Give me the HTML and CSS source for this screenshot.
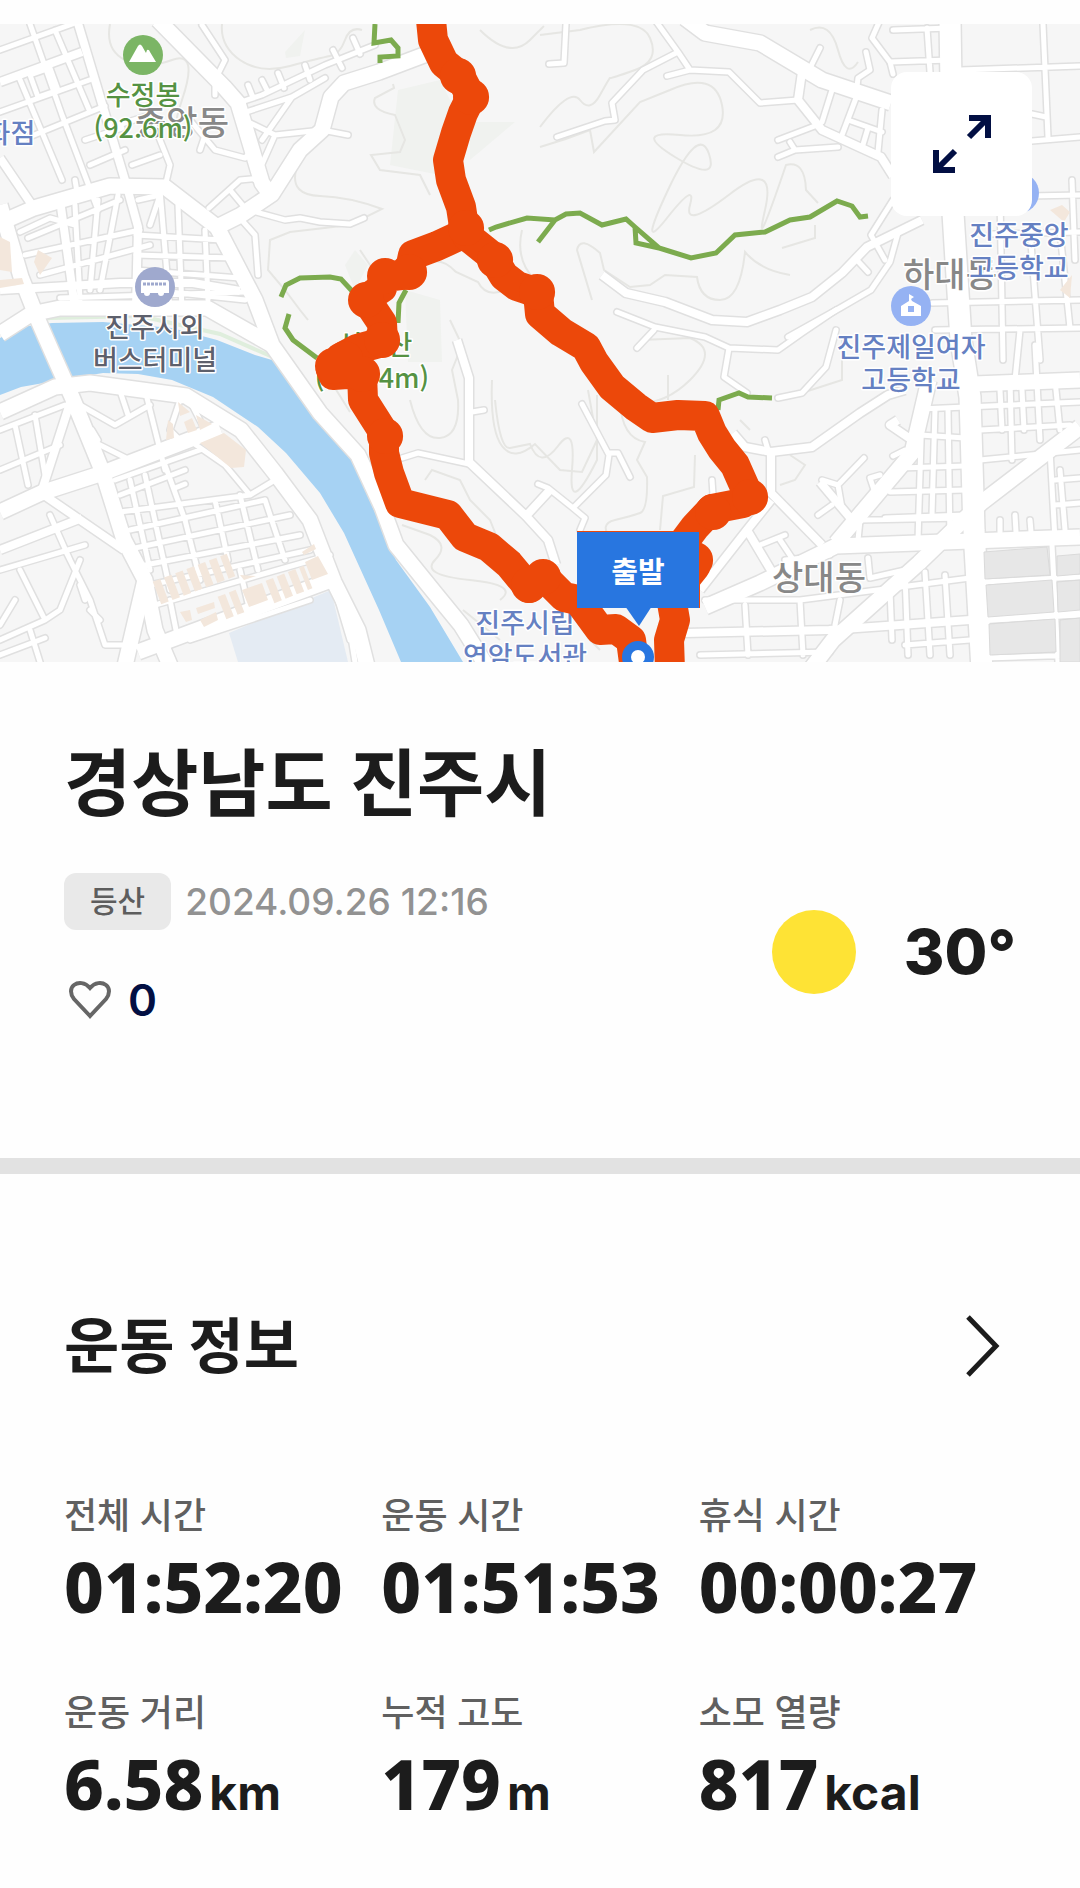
FILE: index.html
```html
<!DOCTYPE html>
<html lang="ko">
<head>
    <meta charset="UTF-8">
    <meta name="viewport" content="width=device-width, initial-scale=1.0">
    <title>경상남도 진주시 - 운동 기록</title>
    <link rel="stylesheet" href="styles.css">
</head>
<body>
    <section class="map">
        <svg class="map-view" viewBox="0 24 1080 638" role="img" aria-label="운동 경로 지도">
            <defs>
                <g id="roads-major" fill="none" stroke-linejoin="round">
                    <path d="M0 223 34 208 110 186 165 187 217 227 241 215 272 194 300 150 322 130 331 97 344 83 379 72 424 55"/>
                    <path d="M158 20 224 87 238 103 262 183 270 194"/>
                    <path d="M217 227 255 300 272 345 320 413 358 455 382 507 396 545 434 592 461 625 489 670"/>
                    <path d="M0 205 21 277 38 320 52 352 72 397 103 473 124 540 145 580 155 630 172 670"/>
                    <path d="M0 412 55 387 90 383 186 396 241 430 275 473 310 520 334 582 358 630 368 670"/>
                    <path d="M0 512 41 493 103 473 220 428"/>
                    <path d="M138 652 331 580M124 670 145 580"/>
                    <path d="M0 334 31 314 60 308 207 308 272 345"/>
                    <path d="M685 18 705 33 760 43 822 80 891 103"/>
                    <path d="M1080 427 981 503 919 563 833 640 810 670"/>
                    <path d="M1080 537 836 546 760 583 705 607"/>
                    <path d="M929 380 912 453 836 543M1080 380 974 384"/>
                </g>
                <g id="roads-wide" fill="none">
                    <path d="M950 20 953 213 961 340 970 397 974 530 982 670"/>
                </g>
                <g id="roads-mid" fill="none" stroke-linejoin="round">
                    <path d="M77 20 103 107 127 187 138 227 136 308"/>
                    <path d="M0 290 120 283 193 283 240 291"/>
                    <path d="M0 82 82 52M0 158 34 208M60 200 75 308M72 397 41 493 124 550M0 550 82 518"/>
                    <path d="M802 72 798 100 822 130 881 157 893 176"/>
                    <path d="M733 433 745 447 771 452 812 447 860 413 888 395 905 390"/>
                    <path d="M771 450 771 493 822 545M700 590 747 530 771 500M747 530 772 572"/>
                    <path d="M922 220 867 247 842 273 812 297 780 310 747 322 712 320 665 302 626 293 602 275"/>
                    <path d="M457 340 469 378 469 462 526 516 548 540 556 565M526 516 550 490"/>
                    <path d="M685 633 829 630 970 620 1080 613"/>
                    <path d="M898 420 890 425 912 440M820 482 852 520"/>
                </g>
                <g id="roads-minor" fill="none" stroke-linecap="round" stroke-linejoin="round">
                    <path d="M557 137 605 121 615 120 612 103 643 70 678 52 655 20M678 52 690 70 667 76M690 70 729 72 745 88 760 103 798 100"/>
                    <path d="M566 24 564 63 549 64M808 72 820 48M778 140 820 124M778 157 795 150 838 147M790 142 795 150"/>
                    <path d="M880 20 872 38 890 62 893 74M866 52 870 70 858 78 856 95M832 90 822 122M856 98 842 135M882 110 878 152M848 120 882 132M868 128 862 148"/>
                    <path d="M890 62 950 60M893 30 950 28M927 28 930 72M1043 24 1048 137M960 70 1080 66M1032 114 1046 117M1032 141 1080 137"/>
                    <path d="M893 200 871 235 885 260M898 233 890 262 871 290 840 308 788 337M855 258 868 272"/>
                    <path d="M245 209 285 220 300 218 320 222 350 224 364 218"/>
                    <path d="M617 312 655 327 705 337 729 348 778 350 802 333 836 310M654 330 637 348M729 348 724 377 747 393M836 330 826 367 802 393 778 398"/>
                    <path d="M582 404 609 455 606 475 573 508 548 488 538 484M609 453 618 453 630 477M573 508 585 518 580 530"/>
                    <path d="M864 458 838 485 822 480M838 485 842 508M880 475 870 478 874 490M905 450 893 456M818 515 832 505M712 480 713 495M765 440 768 450M402 458 418 453 469 464M472 412 484 410"/>
                    <!-- 동부 시가지 -->
                    <path d="M975 197 1080 195M990 234 1080 232M932 303 1080 300M935 330 1080 328M1000 197 1003 360M1030 230 1040 360M1060 232 1070 328M1072 180 1075 260M1020 330 1015 380"/>
                    <path d="M920 409 1080 402M920 435 965 438M900 468 965 466M890 492 965 490M885 518 965 515M858 540 860 520 965 518M1010 380 1012 460M1035 345 1040 440M980 460 1080 450M1050 450 1055 540M1055 480 1080 478M1055 505 1080 503M1060 470 1065 530"/>
                    <path d="M935 409 932 515M948 409 950 540M922 409 918 540M980 430 1070 425M1000 390 1002 430M1022 390 1024 430M1055 380 1060 430M1000 520 1000 532M1015 515 1016 532M1030 520 1031 532"/>
                    <path d="M705 600 800 600 970 578M745 605 748 655M800 600 803 655M840 600 835 625M905 575 908 655M925 572 930 655M890 590 892 640M945 575 950 655M700 655 830 652M905 645 970 640M780 540 800 570M790 580 785 560 830 555M760 545 785 535"/>
                    <path d="M983 582 1080 577M985 620 1080 615M985 658 1080 655M1052 545 1058 662M868 558 870 578 905 570"/>
                    <!-- 서부 시가지 -->
                    <path d="M0 50 78 22M0 112 95 78M22 140 105 106M30 24 62 115M55 30 90 112M62 115 98 210M18 75 62 180M30 75 50 68 58 90 38 97 30 75M85 140 122 128M90 165 125 150M75 180 78 198M118 125 150 115 170 165 165 187M132 165 160 155"/>
                    <path d="M238 103 262 95 325 65 375 45M243 113 292 97 325 78M248 85 252 95M262 80 268 92M278 73 284 88M333 50 342 68M353 38 360 54M305 65 310 80M240 118 275 135 255 180M292 97 262 140M275 135 322 130 348 135M202 25 225 60 215 80 215 95"/>
                    <path d="M190 120 215 150 245 158 252 150M205 135 200 150M209 208 240 180 262 178M230 190 245 208M239 217 255 235 258 275"/>
                    <path d="M20 232 50 218 75 225M28 238 120 200M25 255 140 230M40 275 150 245M75 205 80 300M98 200 90 290M118 195 100 290M136 235 222 240M136 255 232 258M136 270 240 278M160 190 170 310M178 205 182 310M205 230 208 300M150 290 245 300M60 298 245 292M138 200 160 195 150 225"/>
                    <path d="M0 430 65 405M0 470 60 445M15 425 28 485M35 415 45 475M80 405 115 425 150 405M118 385 128 415M145 390 165 470M90 440 130 460M92 430 98 440M165 465 185 520M180 400 170 430 180 440M192 405 205 430"/>
                    <path d="M196 445 225 465 250 495 275 480M115 480 200 450M120 495 185 470M120 512 250 495M130 530 265 500M135 548 290 515M140 566 300 535M150 585 310 550M130 480 150 570M145 475 170 590M185 520 200 580M215 500 228 560M240 495 258 570M265 500 285 560M185 484 175 488"/>
                    <path d="M0 570 85 545M20 570 45 620 60 610 80 560M45 620 0 640M65 550 90 600 105 645 125 645M85 600 80 585M90 610 100 620M15 600 0 625M0 655 45 638M30 630 40 662M50 515 70 560"/>
                    <path d="M155 605 330 555M170 600 178 640M190 640 310 600M240 570 250 612M345 600 355 662M335 590 350 640"/>
                </g>
            </defs>

            <rect class="land" x="0" y="24" width="1080" height="638"/>
            <g class="hill">
                <path d="M398 90 440 80 470 140 440 175 390 165ZM470 122 515 122 470 160ZM285 52 305 30 300 56 286 58ZM405 290 440 300 442 362 408 362ZM355 250 368 265 355 290 345 265Z"/>
            </g>
            <g class="contour">
                <path d="M222 24Q220 46 240 60T290 66 330 56 345 40 362 30M110 24Q105 50 125 60T172 60 182 100 195 120"/>
                <path d="M393 84 394 88 375 98Q370 110 395 115L405 140 400 152 371 155 380 170 420 175 430 195M296 170Q290 195 320 196T382 209L350 225 290 232 270 240 268 270 285 290 300 310 308 320M360 250 370 265 378 275"/>
                <path d="M540 147Q565 140 590 130L594 152 640 102 670 90Q715 70 722 105T680 135 675 157 709 154 668 190 667 218 690 205 730 194 765 210 786 165Q805 160 806 190L818 203"/>
                <path d="M540 35 580 30Q640 15 650 38T635 70 610 78 600 95 580 100 540 127M810 30Q830 20 838 50T858 62M480 30Q510 60 530 40T540 30"/>
                <path d="M592 300 577 250Q580 235 600 253L604 270 630 287 650 285 665 275 697 277Q700 300 720 300T745 252Q760 270 790 275M815 225 815 238 782 248"/>
                <path d="M424 265Q440 255 456 272L478 282Q486 298 505 290M522 230Q515 260 535 280M410 400Q420 440 440 438T458 400L452 370 462 345 450 320M492 380Q490 430 502 446T535 444L560 470 582 472 597 440 588 390"/>
                <path d="M495 400Q500 450 510 448T530 444Q540 470 558 446T572 470 597 460V395M640 340 690 338Q720 350 690 380T620 402Q622 438 645 442L637 460 647 477Q648 510 640 513T615 520 612 540M668 400V375"/>
                <path d="M695 455 694 487 663 496 660 530M842 340 842 380 780 400M750 430 740 420M790 455 805 465 795 480 780 485"/>
                <path d="M425 480 432 470 460 480 470 500 490 520 500 545M402 525 430 535Q450 545 435 560T470 580 500 600M330 380 350 412M463 610 500 640M590 640 600 650"/>
            </g>

            <path class="river-bank" d="M0 332 20 323 50 318 140 316 220 334 275 358"/>
            <path class="river" d="M0 338 21 327 52 323 103 322 172 328 217 340 255 355 272 360 303 393 344 443 365 490 386 537 396 560 430 607 463 662 401 662 379 610 344 533 320 493 286 453 258 427 213 397 172 380 138 374 103 373 55 381 21 387 0 395Z"/>
            <path class="pond" d="M229 633 331 590 348 662 238 662Z"/>

            <g class="road-casing">
                <use href="#roads-minor" stroke-width="8"/>
                <use href="#roads-mid" stroke-width="11"/>
                <use href="#roads-major" stroke-width="18"/>
                <use href="#roads-wide" stroke-width="24"/>
            </g>
            <g class="road-fill">
                <use href="#roads-minor" stroke-width="5"/>
                <use href="#roads-mid" stroke-width="8"/>
                <use href="#roads-major" stroke-width="15"/>
                <use href="#roads-wide" stroke-width="21"/>
            </g>

            <g class="block-warm">
                <path d="M200 443 224 433 246 450 244 467 231 468ZM178 402 190 412 180 416ZM196 415 212 424 200 430ZM184 422 192 418 197 430 188 433ZM168 420 173 424 174 438 166 440ZM0 237 10 242 12 272 0 270ZM38 250 52 258 40 275 34 262ZM0 280 22 278 24 284 0 288ZM1050 210 1062 205 1070 212 1064 222ZM1060 290 1072 275 1070 298Z"/>
                <path d="M302 552 314 544 316 549 304 555ZM305 562 318 556 328 574 312 580ZM240 575 256 576 244 580Z"/>
                <path d="M242 590 262 583 268 600 249 607ZM196 608 214 602 215 608 198 614ZM200 620 216 612 218 620 204 627ZM180 612 190 610 192 620 186 622Z"/>
                <path class="block-row" d="M157 593 231 565"/>
                <path class="block-row" d="M222 608 240 601"/>
                <path class="block-row" d="M270 592 308 577"/>
            </g>
            <g class="block-grey">
                <path d="M984 552 1047 547 1050 575 985 579ZM986 585 1052 580 1054 612 988 617ZM989 624 1055 619 1056 652 990 655ZM1057 556 1080 554 1080 574 1057 576ZM1057 582 1080 580 1080 610 1058 612ZM1060 620 1080 618 1080 662 1060 662Z"/>
            </g>

            <g class="trail">
                <path d="M375 24 374 43 391 40 398 48 398 56 380 57 380 63"/>
                <path d="M281 297 286 285 300 278 330 277 341 279 353 292M289 314 285 328 293 340 317 358M406 290 399 303 398 323"/>
                <path d="M489 230 496 227 527 218 555 220 566 214 580 213 602 225 626 219 635 227 659 248 691 258 716 253 735 235 765 232 790 220 810 217 837 201 852 206 860 217 868 216M555 220 538 242M635 227 636 243 659 248"/>
                <path d="M536 320 552 336M718 410 719 400 739 393 748 397 772 398"/>
            </g>

            <g class="label label-dong">
                <text x="182" y="135">중앙동</text>
                <text x="819" y="590">상대동</text>
                <text x="950" y="287">하대동</text>
            </g>
            <g class="label label-peak">
                <text x="143" y="105">수정봉</text>
                <text x="143" y="138">(92.6m)</text>
                <text x="375" y="355">선학산</text>
                <text x="372" y="388">(134.4m)</text>
            </g>
            <g class="label label-stop">
                <text x="155" y="337">진주시외</text>
                <text x="155" y="370">버스터미널</text>
            </g>
            <g class="label label-place">
                <text x="-2" y="143">백화점</text>
                <text x="1019" y="245">진주중앙</text>
                <text x="1019" y="278">고등학교</text>
                <text x="911" y="357">진주제일여자</text>
                <text x="911" y="390">고등학교</text>
                <text x="525" y="633">진주시립</text>
                <text x="525" y="666">연암도서관</text>
            </g>

            <g>
                <circle cx="143" cy="55" r="20" fill="#7bb565"/>
                <path d="M129 62 138 46Q140 43 142 46L146 53 147 50Q149 49 150 52L156 62Z" fill="#fff"/>
            </g>
            <g>
                <circle cx="155" cy="287" r="20" fill="#9fa9ce"/>
                <path d="M142 280H167Q169 280 169 283V293H164A3 3 0 0 1 158 293H150A3 3 0 0 1 144 293H141V283Q141 280 142 280Z" fill="#fff"/>
                <path d="M143 284H167" stroke="#9fa9ce" stroke-width="3" stroke-dasharray="3 1"/>
            </g>
            <g>
                <circle cx="911" cy="306" r="20" fill="#95b2f3"/>
                <path d="M909 294 914 297 911 299 912 301 921 306V316H901V306L909 301Z" fill="#fff"/>
                <rect x="908" y="306" width="6" height="6" fill="#95b2f3"/>
            </g>
            <circle cx="1019" cy="193" r="20" fill="#95b2f3"/>

            <g class="route">
                <path d="M431 20 433 40 444 63 460 76 471 97 463 113 456 133 448 160 451 180 461 207 465 233 437 246 413 255 409 274 385 277 382 288 366 299 382 323 383 342 357 349 340 358 331 370 333 375 362 373 363 400 384 433 384 453 389 473 400 503 420 508 448 515 465 537 489 547 509 564 529 588 543 576 564 597 578 600 600 630 616 629 631 640 635 670"/>
                <path d="M467 236 492 256 504 276 517 286 538 293 540 314 561 332 586 347 594 362 612 387 636 407 652 418 678 415 705 416 712 433 722 449 735 465 747 492 751 497 743 503 712 509 695 527 683 543 695 567 671 597 675 620 669 640 670 670"/>
                <path class="route-blob" d="M385 276h.1M471 97h.1M529 585h.1M543 577h.1M750 497h.1M458 76h.1M537 292h.1M409 272h.1M333 366h.1M385 436h.1M345 359h.1M366 300h.1M466 228h.1M362 374h.1M382 340h.1M695 560h.1M495 260h.1M713 512h.1"/>
            </g>

            <g class="start">
                <circle cx="638" cy="657" r="16"/>
                <circle cx="638" cy="657" r="7" fill="#fff"/>
                <path d="M625 606H652L639 626Z"/>
                <rect class="start-edge" x="577" y="531" width="123" height="77"/>
                <rect x="577" y="532" width="122" height="76"/>
                <text x="638" y="583">출발</text>
            </g>
        </svg>
        <button class="expand-btn" type="button" aria-label="지도 확대">
            <svg viewBox="0 0 58 58" fill="none" stroke="currentColor" stroke-width="6">
                <path d="M36 3H55V23M55 3 36 22M3 35V55H22M3 55 22 36"/>
            </svg>
        </button>
    </section>

    <section class="summary">
        <h1>경상남도 진주시</h1>
        <div class="summary-row">
            <div class="summary-info">
                <div class="meta">
                    <span class="tag">등산</span>
                    <time datetime="2024-09-26T12:16">2024.09.26 12:16</time>
                </div>
                <button class="like-btn" type="button" aria-label="좋아요 0">
                    <svg viewBox="0 0 44 40" fill="none" stroke="currentColor" stroke-width="4">
                        <path d="M22 36 6 19C2 14 2 8 6 5S17 2 22 8C27 2 34 2 38 5S42 14 38 19Z"/>
                    </svg>
                    <span>0</span>
                </button>
            </div>
            <div class="weather">
                <span class="sun"></span>
                <strong>30°</strong>
            </div>
        </div>
    </section>

    <section class="workout">
        <div class="workout-header">
            <h2>운동 정보</h2>
            <button class="more-btn" type="button" aria-label="운동 정보 더보기">
                <svg viewBox="0 0 34 64" fill="none" stroke="currentColor" stroke-width="5">
                    <path d="M2 3 30 32 2 61"/>
                </svg>
            </button>
        </div>
        <dl class="stats">
            <div class="stat">
                <dt>전체 시간</dt>
                <dd>01:52:20</dd>
            </div>
            <div class="stat">
                <dt>운동 시간</dt>
                <dd>01:51:53</dd>
            </div>
            <div class="stat">
                <dt>휴식 시간</dt>
                <dd>00:00:27</dd>
            </div>
            <div class="stat">
                <dt>운동 거리</dt>
                <dd>6.58<small>km</small></dd>
            </div>
            <div class="stat">
                <dt>누적 고도</dt>
                <dd>179<small>m</small></dd>
            </div>
            <div class="stat">
                <dt>소모 열량</dt>
                <dd>817<small>kcal</small></dd>
            </div>
        </dl>
    </section>
</body>
</html>
```
FILE: styles.css
```css
* {
    margin: 0;
    padding: 0;
    box-sizing: border-box;
}

body {
    font-family: Inter, 'Noto Sans CJK KR', sans-serif;
    background-color: #fefefe;
    color: #1c1c1c;
    padding-top: 24px;
}

button {
    background: none;
    border: none;
    font-family: inherit;
    cursor: pointer;
}

/* 지도 */
.map {
    position: relative;
}

.map-view {
    display: block;
    width: 100%;
    height: auto;
}

.land {
    fill: #f6f6f6;
}

.hill {
    fill: #f0f2ef;
}

.contour {
    fill: none;
    stroke: #e6e6e3;
    stroke-width: 2;
}

.river {
    fill: #a6d2f3;
}

.river-bank {
    fill: none;
    stroke: #dfeedd;
    stroke-width: 4;
}

.pond {
    fill: #e4ebf3;
}

.road-casing {
    stroke: #e0e0e0;
}

.road-fill {
    stroke: #fff;
}

.block-warm {
    fill: #f3e7dc;
}

.block-row {
    fill: none;
    stroke: #f3e7dc;
    stroke-width: 24;
    stroke-dasharray: 8 4;
}

.block-grey {
    fill: #e7e7e7;
    stroke: #dadada;
}

.trail {
    fill: none;
    stroke: #7cab4e;
    stroke-width: 5;
}

.label {
    font-family: 'Noto Sans CJK KR', sans-serif;
    font-size: 27px;
    font-weight: 500;
    text-anchor: middle;
    stroke: #fff;
    stroke-width: 3;
    stroke-linejoin: round;
    paint-order: stroke;
}

.label-dong {
    font-size: 34px;
    fill: #888;
}

.label-peak {
    fill: #559243;
}

.label-stop {
    fill: #5d606c;
}

.label-place {
    fill: #6580c2;
}

.route {
    fill: none;
    stroke: #ec480a;
    stroke-width: 30;
    stroke-linejoin: round;
    stroke-linecap: round;
}

.route-blob {
    stroke-width: 36;
}

.start {
    fill: #2876e0;
}

.start-edge {
    fill: #ec480a;
}

.start text {
    font-family: 'Noto Sans CJK KR', sans-serif;
    font-size: 29px;
    font-weight: 700;
    text-anchor: middle;
    fill: #fff;
}

.expand-btn {
    position: absolute;
    top: 48px;
    right: 48px;
    width: 141px;
    height: 144px;
    display: flex;
    align-items: center;
    justify-content: center;
    background: #fff;
    border-radius: 16px;
    color: #020f43;
}

.expand-btn svg {
    width: 58px;
    height: 58px;
}

/* 기록 요약 */
.summary {
    padding: 74px 64px 128px;
    border-bottom: 16px solid #e2e2e2;
}

h1 {
    font-size: 73px;
    font-weight: 700;
    line-height: 96px;
}

.summary-row {
    display: flex;
    justify-content: space-between;
    align-items: center;
    margin-top: 41px;
}

.meta {
    display: flex;
    align-items: center;
    gap: 14px;
}

.tag {
    padding: 0 26px;
    border-radius: 12px;
    background: #e9e9e9;
    color: #5d5d5d;
    font-size: 30px;
    font-weight: 500;
    line-height: 57px;
}

time {
    color: #929292;
    font-size: 37px;
    font-weight: 500;
}

.like-btn {
    display: flex;
    align-items: center;
    gap: 16px;
    margin-top: 40px;
    padding: 0 4px;
    color: #020f43;
    font-size: 44px;
    font-weight: 600;
    line-height: 60px;
}

.like-btn svg {
    width: 44px;
    height: 40px;
    color: #666;
}

.weather {
    display: flex;
    align-items: center;
    gap: 48px;
}

.sun {
    width: 84px;
    height: 84px;
    border-radius: 50%;
    background: #fee335;
}

.weather strong {
    font-size: 62px;
    font-weight: 800;
    line-height: 80px;
}

/* 운동 정보 */
.workout {
    padding: 128px 64px 64px;
}

.workout-header {
    display: flex;
    justify-content: space-between;
    align-items: center;
    padding-right: 16px;
}

h2 {
    font-size: 60px;
    font-weight: 700;
    line-height: 88px;
}

.more-btn {
    color: #1c1c1c;
}

.more-btn svg {
    display: block;
    width: 34px;
    height: 64px;
}

.stats {
    display: grid;
    grid-template-columns: repeat(3, 1fr);
    row-gap: 57px;
    margin-top: 96px;
}

.stat dt {
    color: #606060;
    font-size: 36px;
    font-weight: 500;
    line-height: 60px;
}

.stat dd {
    font-family: 'Noto Sans', sans-serif;
    font-size: 69px;
    font-weight: 800;
    line-height: 80px;
    white-space: nowrap;
}

.stat small {
    margin-left: 6px;
    font-family: Inter, sans-serif;
    font-size: 48px;
    font-weight: 700;
}
```
